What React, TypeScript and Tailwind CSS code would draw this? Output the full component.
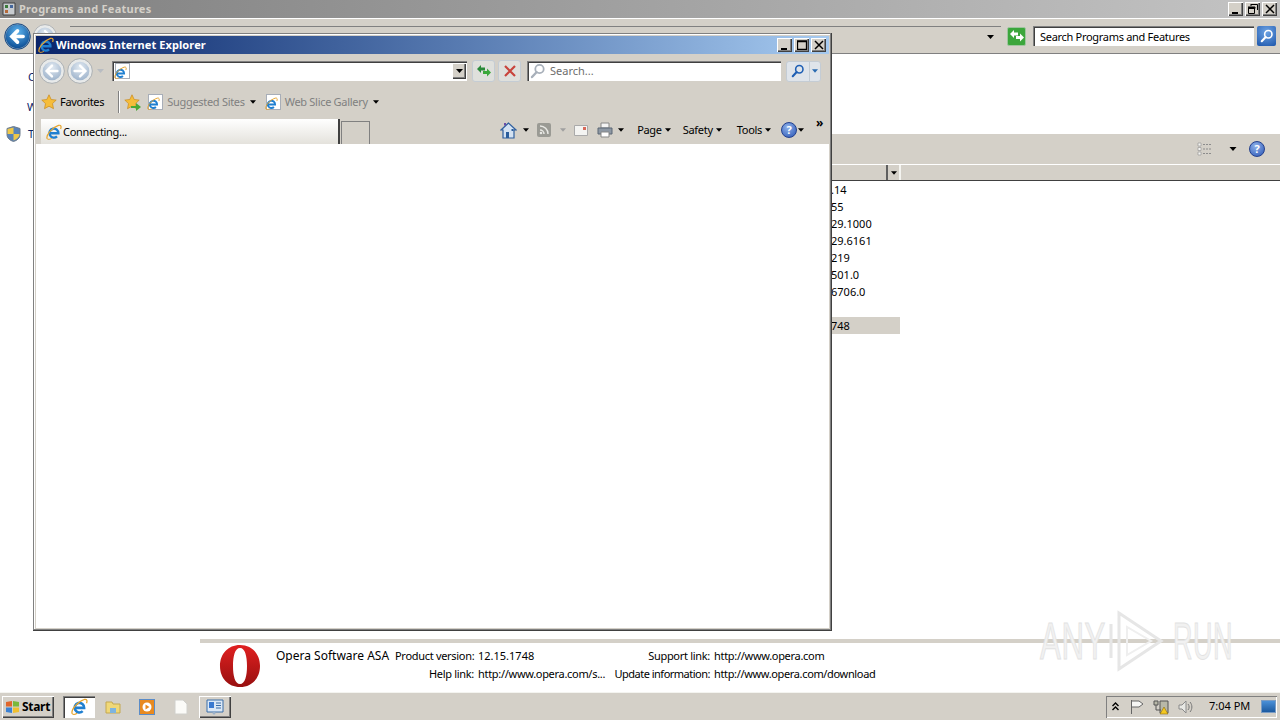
import type { ReactNode } from "react"

const raised = "shadow-[inset_1px_1px_0_#ffffff,inset_-1px_-1px_0_#404040,inset_-2px_-2px_0_#808080]"
const sunken = "shadow-[inset_1px_1px_0_#808080,inset_2px_2px_0_#404040,inset_-1px_-1px_0_#ffffff]"

function IeLogo({ size = 16 }: { size?: number }) {
  return (
    <svg width={size} height={size} viewBox="0 0 16 16" className="shrink-0">
      <path d="M3.800 9.300H12.400A4.500 4.500 0 1 0 11 12.400" fill="none" stroke="#1f7fd0" strokeWidth="2.400" />
      <path d="M1.200 14.800C-.5 11.500 6 3.500 12.500 1.400c2.600-.7 3 1.200 2.100 3.600" fill="none" stroke="#e6a52e" strokeWidth="1.200" />
      <path d="M1.200 14.800c1 1 3 .6 4.600-.5" fill="none" stroke="#e6a52e" strokeWidth="1" />
    </svg>
  )
}

function PageIe() {
  return (
    <span className="relative block h-[16px] w-[15px] shrink-0 border border-[#a8aeb8] bg-white">
      <span className="absolute left-[-2px] top-[2px]"><IeLogo size={13} /></span>
    </span>
  )
}

function CaptionButtons({ restore }: { restore?: boolean }) {
  const btn = `flex h-[14px] w-[15px] items-center justify-center bg-[#d4d0c8] ${raised}`
  return (
    <div className="flex gap-[2px]">
      <div className={btn}>
        <svg width="10" height="10" viewBox="0 0 10 10"><path d="M1 8h6v2H1z" fill="#000" /></svg>
      </div>
      <div className={btn}>
        <svg width="10" height="10" viewBox="0 0 10 10">
          {restore ? (
            <path d="M3 .5h6.500V6M3 0v2M.5 3.500h6v6h-6zM0 3h7v1.500H0z" fill="none" stroke="#000" />
          ) : (
            <path d="M.5 1.500h9v8h-9zM0 1h10" fill="none" stroke="#000" strokeWidth="1.300" />
          )}
        </svg>
      </div>
      <div className={btn}>
        <svg width="10" height="10" viewBox="0 0 10 10"><path d="M1 1l8 8M9 1l-8 8" stroke="#000" strokeWidth="1.500" /></svg>
      </div>
    </div>
  )
}

function Arrow({ color = "#000", w = 7 }: { color?: string; w?: number }) {
  return (
    <svg width={w} height="4" viewBox="0 0 7 4" className="shrink-0">
      <path d="M0 0h7L3.500 4z" fill={color} />
    </svg>
  )
}

function RoundNav({ dir, size, live }: { dir: "left" | "right"; size: number; live?: boolean }) {
  const d = dir === "left" ? "M17 12H8m4-5l-5 5 5 5" : "M7 12h9m-4-5l5 5-5 5"
  return (
    <svg width={size} height={size} viewBox="0 0 24 24" className="shrink-0">
      <defs>
        <radialGradient id={`rn${dir}${size}`} cx="50%" cy="30%" r="70%">
          <stop offset="0%" stopColor={live ? "#5eb4ee" : "#e2eaf2"} />
          <stop offset="100%" stopColor={live ? "#0d4f96" : "#9fb4cc"} />
        </radialGradient>
      </defs>
      <circle cx="12" cy="12" r="11.400" fill={live ? "#7f9cb8" : "#e8eaea"} stroke={live ? "#0c3f7c" : "#a4a8ac"} strokeWidth=".8" />
      <circle cx="12" cy="12" r={live ? 10.400 : 8.600} fill={`url(#rn${dir}${size})`} />
      <path d={d} fill="none" stroke="#fff" strokeWidth={live ? 3.200 : 2.200} strokeLinecap="round" />
    </svg>
  )
}

function Refresh({ solid }: { solid?: boolean }) {
  return (
    <svg width="16" height="14" viewBox="0 0 16 14">
      <path d="M1 5l4-4v2.500h4V6.500H5V9z" fill={solid ? "#fff" : "#2a8a3a"} />
      <path d="M15 8.500l-4 4V10H7V7h4V4.500z" fill={solid ? "#fff" : "#3aa83a"} />
    </svg>
  )
}

function Magnifier({ color = "#1f5fb4", size = 16 }: { color?: string; size?: number }) {
  return (
    <svg width={size} height={size} viewBox="0 0 16 16" className="shrink-0">
      <circle cx="9.500" cy="6" r="4.200" fill="none" stroke={color} strokeWidth="1.800" />
      <path d="M6.500 9.200L2 14" stroke={color} strokeWidth="2.400" strokeLinecap="round" />
    </svg>
  )
}

function HelpIcon({ size = 16 }: { size?: number }) {
  return (
    <span
      className="flex shrink-0 items-center justify-center rounded-full border border-[#23408e] bg-[radial-gradient(circle_at_40%_30%,#8fb2ea,#2a55b5)] font-bold text-white"
      style={{ width: size, height: size, fontSize: size - 5 }}
    >
      ?
    </span>
  )
}

function Star({ size = 16 }: { size?: number }) {
  return (
    <svg width={size} height={size} viewBox="0 0 16 16" className="shrink-0">
      <path d="M8 .8l2.200 4.700 5 .6-3.700 3.500 1 5.100L8 12.200 3.500 14.700l1-5.100L.8 6.100l5-.6z" fill="#f6bd3a" stroke="#c98a1c" strokeWidth=".7" />
    </svg>
  )
}

function ToolText({ children }: { children: ReactNode }) {
  return (
    <div className="flex items-center gap-[3px]">
      <span>{children}</span>
      <Arrow w={6} />
    </div>
  )
}

function IeWindow() {
  return (
    <div className="absolute left-[33px] top-[33px] flex h-[598px] w-[799px] flex-col bg-[#d4d0c8] p-[3px] shadow-[inset_-1px_-1px_0_#404040,inset_-2px_-2px_0_#808080,inset_1px_1px_0_#808080,inset_2px_2px_0_#ffffff]">
      <div className="flex h-[18px] shrink-0 items-center justify-between bg-gradient-to-r from-[#0a246a] to-[#a6caf0] pl-[2px] pr-[3px]">
        <div className="flex items-center gap-[2px]">
          <IeLogo />
          <span className="text-[11px] font-bold tracking-[0.1px] text-white">Windows Internet Explorer</span>
        </div>
        <CaptionButtons />
      </div>

      <div className="flex h-[34px] shrink-0 items-center pl-[3px] pr-[5px]">
        <RoundNav dir="left" size={26} />
        <div className="ml-[2px]"><RoundNav dir="right" size={26} /></div>
        <div className="ml-[4px] mr-[8px]"><Arrow color="#b8bcc2" /></div>
        <div className={`flex h-[20px] w-[355px] items-center justify-between bg-white pl-[3px] pr-[1px] ${sunken}`}>
          <PageIe />
          <div className={`flex h-[16px] w-[14px] items-center justify-center bg-[#d4d0c8] ${raised}`}>
            <Arrow />
          </div>
        </div>
        <div className="ml-[5px] flex h-[22px] w-[23px] items-center justify-center rounded-[3px] border border-[#c4ccd4] bg-[#dfe0dc]">
          <Refresh />
        </div>
        <div className="ml-[3px] flex h-[22px] w-[23px] items-center justify-center rounded-[3px] border border-[#c4ccd4] bg-[#dfe0dc]">
          <svg width="12" height="12" viewBox="0 0 12 12"><path d="M1 1l10 10M11 1L1 11" stroke="#c8443c" strokeWidth="2.200" /></svg>
        </div>
        <div className={`ml-[6px] flex h-[20px] w-[254px] items-center gap-[4px] bg-white pl-[3px] ${sunken}`}>
          <Magnifier color="#a8b0ba" />
          <span className="tracking-normal text-[#6d6d6d]">Search...</span>
        </div>
        <div className="ml-[5px] flex h-[21px] w-[35px] items-center rounded-[3px] border border-[#c4ccd4] bg-[#dfe4ea]">
          <div className="flex w-[22px] justify-center"><Magnifier size={14} /></div>
          <div className="flex h-full flex-1 items-center justify-center border-l border-[#c4ccd4]"><Arrow color="#2a6bb0" w={6} /></div>
        </div>
      </div>

      <div className="flex h-[30px] shrink-0 items-center pb-[2px] pl-[5px]">
        <Star />
        <span className="ml-[3px] text-black">Favorites</span>
        <div className="ml-[14px] h-[22px] w-[2px] border-l border-r border-l-[#808080] border-r-white" />
        <div className="relative ml-[4px]">
          <Star />
          <svg width="10" height="8" viewBox="0 0 10 8" className="absolute left-[7px] top-[9px]"><path d="M0 3h5V0l5 4-5 4V5H0z" fill="#4aa838" /></svg>
        </div>
        <div className="ml-[8px]"><PageIe /></div>
        <span className="ml-[4px] text-[#808080]">Suggested Sites</span>
        <div className="ml-[5px]"><Arrow w={6} /></div>
        <div className="ml-[10px]"><PageIe /></div>
        <span className="ml-[4px] text-[#808080]">Web Slice Gallery</span>
        <div className="ml-[5px]"><Arrow w={6} /></div>
      </div>

      <div className="flex h-[26px] shrink-0 items-end pl-[5px] pr-[3px]">
        <div className="flex h-[25px] w-[297px] items-center gap-[1px] bg-gradient-to-b from-white to-[#e4e2dc] pl-[5px] pt-[1px] text-black">
          <IeLogo />
          <span>Connecting...</span>
        </div>
        <div className="h-[25px] w-[2px] bg-[#404040]" />
        <div className="ml-[1px] h-[23px] w-[29px] border-x border-t border-x-[#808080] border-t-[#808080]" />
        <div className="relative ml-auto flex h-[25px] items-center pb-[3px] pr-[22px]">
          <svg width="17" height="17" viewBox="0 0 17 17">
            <path d="M8.500 1L1 8h2v8h11V8h2z" fill="#d4e2f2" stroke="#2f5f9e" strokeWidth="1.200" />
            <path d="M6 10h3v6H6z" fill="#2a5d9c" />
            <path d="M11.500 7h2v2h-2z" fill="#2a5d9c" />
            <path d="M4 1h2v2.500H4z" fill="#6a4ea8" />
          </svg>
          <div className="ml-[6px]"><Arrow w={6} /></div>
          <div className="ml-[8px] flex h-[14px] w-[14px] items-center justify-center rounded-[2px] bg-[#9a9a94]">
            <svg width="10" height="10" viewBox="0 0 10 10"><path d="M1 1a8 8 0 0 1 8 8M1 5a4 4 0 0 1 4 4" fill="none" stroke="#e8e8e4" strokeWidth="1.500" /><circle cx="2" cy="8" r="1.300" fill="#e8e8e4" /></svg>
          </div>
          <div className="ml-[9px]"><Arrow color="#a0a0a0" w={6} /></div>
          <svg width="14" height="11" viewBox="0 0 14 11" className="ml-[8px]"><path d="M.5.500h13v10H.5z" fill="#f4f4f2" stroke="#aaa" /><path d="M9 2h3v3H9z" fill="#d86a5a" /></svg>
          <svg width="16" height="16" viewBox="0 0 16 16" className="ml-[9px]">
            <path d="M4 1h8v5H4z" fill="#f4f4f4" stroke="#888" /><path d="M1 6h14v6H1z" fill="#8e98a4" stroke="#5b6674" /><path d="M4 10h8v5H4z" fill="#fff" stroke="#888" />
          </svg>
          <div className="ml-[5px]"><Arrow w={6} /></div>
          <div className="ml-[13px] flex items-center text-black">
            <ToolText>Page</ToolText>
            <div className="ml-[12px]"><ToolText>Safety</ToolText></div>
            <div className="ml-[15px]"><ToolText>Tools</ToolText></div>
          </div>
          <div className="ml-[10px]"><HelpIcon /></div>
          <div className="ml-[1px]"><Arrow w={6} /></div>
          <span className="absolute right-[3px] top-[-3px] text-[12px] font-bold leading-[14px] text-black">»</span>
        </div>
      </div>

      <div className="min-h-0 flex-1 bg-white" />
    </div>
  )
}

function Watermark() {
  const letters = "block font-['Liberation_Sans'] text-[52px] leading-none tracking-[1px] text-[#f1f1f1] [-webkit-text-stroke:1px_#e2e2e2]"
  return (
    <div className="pointer-events-none absolute left-[1040px] top-[610px] flex h-[62px] items-center">
      <div className="w-[60px]"><span className={`${letters} origin-left scale-x-[0.6]`}>ANY</span></div>
      <svg width="56" height="62" viewBox="0 0 56 62" className="ml-[8px]">
        <path d="M3 14v34M11 3v56l42-28z" fill="none" stroke="#e6e6e6" strokeWidth="3" />
        <path d="M19 17v28l24-14z" fill="none" stroke="#efefef" strokeWidth="2" />
      </svg>
      <div className="ml-[9px] w-[59px]"><span className={`${letters} origin-left scale-x-[0.52]`}>RUN</span></div>
    </div>
  )
}

const versions = [".14", "55", "29.1000", "29.6161", "219", "501.0", "6706.0", "", "748"]

export default function App() {
  return (
    <div className="relative flex h-[720px] w-[1280px] flex-col overflow-hidden bg-white font-['Noto_Sans',sans-serif] text-[11px] tracking-[-0.3px] text-black">
      {/* explorer window behind */}
      <div className="flex h-[18px] shrink-0 items-center justify-between bg-gradient-to-r from-[#808080] to-[#c4c4c4] pl-[2px] pr-[3px]">
        <div className="flex items-center gap-[3px]">
          <svg width="14" height="14" viewBox="0 0 14 14">
            <path d="M1 1h12v12H1z" fill="#c8ccd0" stroke="#404040" />
            <path d="M3 3h3v3H3z" fill="#3a7a3a" /><path d="M8 3h3v3H8z" fill="#44669c" /><path d="M3 8h3v3H3z" fill="#b46a3a" />
          </svg>
          <span className="text-[11px] font-bold tracking-[0.25px] text-[#d4d0c8]">Programs and Features</span>
        </div>
        <CaptionButtons restore />
      </div>

      <div className="flex h-[36px] shrink-0 items-center border-y border-t-white border-b-[#808080] bg-[#d4d0c8] pl-[4px] pr-[2px]">
        <RoundNav dir="left" size={27} live />
        <div className="ml-[2px]"><RoundNav dir="right" size={24} /></div>
        <div className="ml-[13px] flex h-[20px] w-[931px] items-center justify-end border-t border-[#808080] pr-[6px]">
          <Arrow w={9} />
        </div>
        <div className="ml-[6px] flex h-[19px] w-[19px] items-center justify-center rounded-[2px] border border-[#9fc59f] bg-[#3ca63c]">
          <Refresh solid />
        </div>
        <div className={`ml-[7px] flex h-[20px] w-[221px] items-center bg-white pl-[7px] pt-[2px] ${sunken}`}>
          Search Programs and Features
        </div>
        <div className="ml-[3px] flex h-[20px] w-[19px] items-center justify-center rounded-[2px] bg-[radial-gradient(circle_at_50%_30%,#6ea4e4,#1d56ab)]">
          <Magnifier color="#fff" size={14} />
        </div>
      </div>

      <div className="flex min-h-0 flex-1">
        <aside className="relative w-[200px] shrink-0 pl-[6px] text-[#0a246a]">
          <div className="h-[15px] pl-[22px] pt-[15px] leading-[15px]">C</div>
          <div className="h-[20px] pl-[21px] pt-[30px] leading-[15px]">W</div>
          <div className="flex items-center gap-[7px] pt-[27px]">
            <svg width="15" height="16" viewBox="0 0 15 16">
              <path d="M7.500 .5l6.500 2v6c0 3.500-3 6-6.500 7C4 14.500 1 12 1 8.500v-6z" fill="#5a84b8" stroke="#6b7a8c" />
              <path d="M7.500 1.500V8H1.500v-5zM7.500 8H13.500c0 3-3 5.500-6 6.500z" fill="#f0c848" />
            </svg>
            <span>T</span>
          </div>
        </aside>

        <div className="flex min-w-0 flex-1 flex-col">
          <div className="h-[80px] shrink-0" />
          <div className="flex h-[30px] shrink-0 items-center justify-end bg-[#d4d0c8] pr-[15px]">
            <svg width="16" height="14" viewBox="0 0 16 14">
              <path d="M1 1h3v3H1zM1 5.500h3v3H1zM1 10h3v3H1z" fill="#f4f4f2" stroke="#9a9a9a" strokeWidth=".7" />
              <path d="M6 2.500h9M6 7h9M6 11.500h9" stroke="#8c8c8c" strokeDasharray="2 1" />
            </svg>
            <div className="ml-[16px]"><Arrow w={8} /></div>
            <div className="ml-[12px]"><HelpIcon /></div>
          </div>
          <div className="flex h-[17px] shrink-0 border-y border-t-white border-b-[#404040] bg-[#d4d0c8]">
            <div className="ml-[686px] w-[2px] bg-[#606060]" />
            <div className="flex w-[11px] items-center justify-center"><Arrow w={6} /></div>
            <div className="w-[2px] bg-[#f4f4f0]" />
          </div>
          <div className="ml-[631px] w-[69px] shrink-0 tracking-normal">
            {versions.map((v, i) => (
              <div key={i} className={`h-[17px] leading-[17px] ${v === "748" ? "bg-[#d4d0c8]" : ""}`}>{v}</div>
            ))}
          </div>

          <div className="mt-auto flex h-[53px] shrink-0 border-t-[4px] border-[#d4d0c8]">
            <svg width="42" height="44" viewBox="0 0 42 44" className="ml-[19px] mt-[1px] shrink-0">
              <defs>
                <linearGradient id="opera" x1="0" y1="0" x2="0" y2="1">
                  <stop offset="0%" stopColor="#e02020" />
                  <stop offset="100%" stopColor="#981010" />
                </linearGradient>
              </defs>
              <path fillRule="evenodd" d="M21 1C9 1 1 10 1 22s8 21 20 21 20-9 20-21S33 1 21 1zm0 3c5 0 7 8 7 18s-2 18-7 18-7-8-7-18 2-18 7-18z" fill="url(#opera)" />
            </svg>
            <div className="ml-[15px] w-[119px] shrink-0 pt-[4px] text-[12px] leading-[17px] tracking-normal">Opera Software ASA</div>
            <div className="grid grid-cols-[79px_132px_96px_1fr] grid-rows-[18px_18px] gap-x-[4px] whitespace-nowrap pt-[4px] leading-[17px]">
              <div className="text-right">Product version:</div>
              <div className="tracking-normal">12.15.1748</div>
              <div className="text-right">Support link:</div>
              <div>http://www.opera.com</div>
              <div className="text-right">Help link:</div>
              <div>http://www.opera.com/s...</div>
              <div className="text-right tracking-[-0.5px]">Update information:</div>
              <div className="tracking-[-0.35px]">http://www.opera.com/download</div>
            </div>
          </div>
        </div>
      </div>

      {/* taskbar */}
      <div className="flex h-[28px] shrink-0 items-center border-t border-t-[#f4f4f0] bg-[#d4d0c8] pl-[2px] pr-[3px]">
        <div className={`flex h-[22px] w-[52px] items-center gap-[2px] pl-[3px] text-[12px] font-bold ${raised}`}>
          <svg width="15" height="14" viewBox="0 0 15 14">
            <path d="M1 2l6-1v5.500H1z" fill="#e0662c" /><path d="M8 1l6 1v4.500H8z" fill="#7ab83c" /><path d="M1 7.500h6V13l-6-1z" fill="#3c82d4" /><path d="M8 7.500h6V12l-6 1z" fill="#f0c030" />
          </svg>
          Start
        </div>
        <div className={`ml-[9px] flex h-[22px] w-[32px] items-center justify-center bg-white ${sunken}`}>
          <IeLogo size={17} />
        </div>
        <svg width="16" height="16" viewBox="0 0 16 16" className="ml-[10px]">
          <path d="M1 3h6l1 2h7v9H1z" fill="#f0d878" stroke="#c4a850" /><path d="M5 14V9h6v5" fill="#7eb4e0" />
        </svg>
        <div className="ml-[18px] flex h-[16px] w-[16px] items-center justify-center border border-[#5a8cc8] bg-[#e88a20]">
          <svg width="10" height="10" viewBox="0 0 10 10"><circle cx="5" cy="5" r="4.500" fill="#fff" /><path d="M3.500 2.500L7.500 5l-4 2.500z" fill="#e88a20" /></svg>
        </div>
        <svg width="14" height="16" viewBox="0 0 14 16" className="ml-[19px]"><path d="M1 1h8l4 4v10H1z" fill="#fbfbf8" stroke="#d0d0cc" /></svg>
        <div className={`ml-[11px] flex h-[22px] w-[32px] items-center justify-center ${raised}`}>
          <svg width="18" height="16" viewBox="0 0 18 16">
            <path d="M1 1h16v12H1z" fill="#dbe8f6" stroke="#3a6ea8" /><path d="M3 3h5v6H3z" fill="#3a7ad0" /><path d="M10 4h5M10 6.500h5M10 9h5" stroke="#3a6ea8" /><circle cx="8" cy="14" r="1.500" fill="#9ab0c8" />
          </svg>
        </div>
        <div className="ml-auto flex h-[22px] w-[171px] items-center pl-[6px] pr-[1px] shadow-[inset_1px_1px_0_#808080,inset_-1px_-1px_0_#ffffff]">
          <svg width="7" height="9" viewBox="0 0 7 9"><path d="M.5 4l3-3 3 3M.5 8l3-3 3 3" fill="none" stroke="#000" strokeWidth="1.400" /></svg>
          <svg width="16" height="16" viewBox="0 0 16 16" className="ml-[10px]"><path d="M2.500 1v14M3 2h7l4 3-4 3H3" fill="#f6f6f4" stroke="#666" /></svg>
          <svg width="16" height="16" viewBox="0 0 16 16" className="ml-[8px]">
            <path d="M1 2h4v4H1zM7 2h8v12H7z" fill="#b8b8a8" stroke="#555" /><path d="M3 6v5h5" fill="none" stroke="#555" /><path d="M11 8l4 7H7z" fill="#f4c820" stroke="#8a6a10" strokeWidth=".6" />
          </svg>
          <svg width="16" height="16" viewBox="0 0 16 16" className="ml-[8px]">
            <path d="M2 6h3l4-4v12l-4-4H2z" fill="#e8e8e4" stroke="#8a8a8a" /><path d="M11 5c1.500 2 1.500 4 0 6M13 3c2.500 3 2.500 7 0 10" fill="none" stroke="#777" />
          </svg>
          <span className="ml-[16px] whitespace-nowrap tracking-normal text-black">7:04 PM</span>
          <div className="ml-auto h-[13px] w-[15px] border border-[#7a9cc4] bg-gradient-to-b from-[#4a90d8] to-[#1c5aa0]" />
        </div>
      </div>

      <IeWindow />
      <Watermark />
    </div>
  )
}
